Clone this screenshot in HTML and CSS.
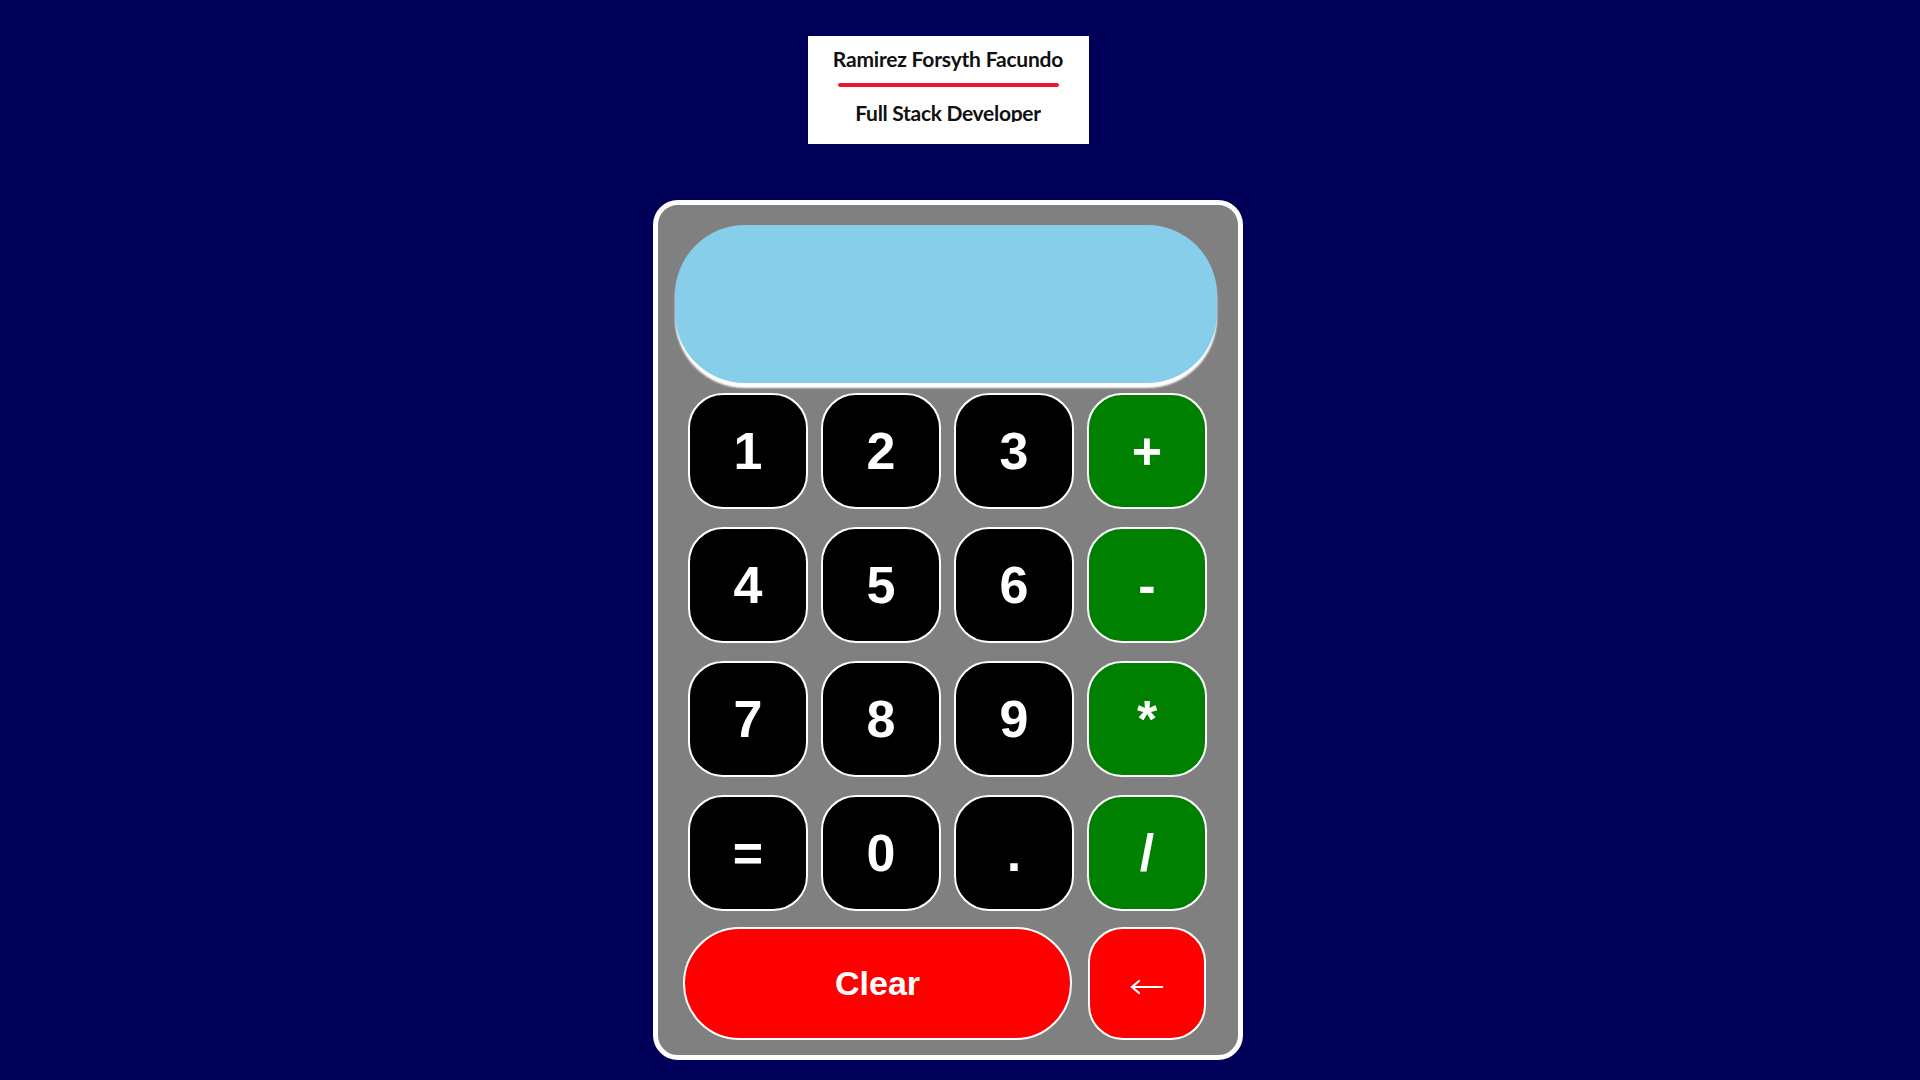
FILE: index.html
```html
<!DOCTYPE html>
<html lang="es">
<head>
<meta charset="utf-8">
<title>Calculadora</title>
<link rel="stylesheet" href="styles.css">
</head>
<body>
<div class="page">
  <header class="card">
    <div class="name">Ramirez Forsyth Facundo</div>
    <div class="rule"></div>
    <div class="role">Full Stack Developer</div>
  </header>
  <main class="calc">
    <div class="display"></div>
    <div class="keys">
      <button class="key num">1</button>
      <button class="key num">2</button>
      <button class="key num">3</button>
      <button class="key op">+</button>
      <button class="key num">4</button>
      <button class="key num">5</button>
      <button class="key num">6</button>
      <button class="key op">-</button>
      <button class="key num">7</button>
      <button class="key num">8</button>
      <button class="key num">9</button>
      <button class="key op">*</button>
      <button class="key num">=</button>
      <button class="key num">0</button>
      <button class="key num">.</button>
      <button class="key op">/</button>
    </div>
    <div class="bottom">
      <button class="clear">Clear</button>
      <button class="back" aria-label="Borrar">
        <svg class="arrow" width="34" height="16" viewBox="0 0 34 16" fill="none" stroke="#fff" stroke-width="2.2" stroke-linecap="square">
          <path d="M2 8 H32"/>
          <path d="M9 2 L2 8 L9 14" stroke-linecap="round" stroke-linejoin="miter"/>
        </svg>
      </button>
    </div>
  </main>
</div>
</body>
</html>
```
FILE: styles.css
```css
html, body {
  margin: 0;
  padding: 0;
}
body {
  background: #000058;
  font-family: "Liberation Sans", Arial, sans-serif;
}
.page {
  display: flex;
  flex-direction: column;
  align-items: center;
  padding-top: 36px;
  padding-right: 24px;
  height: 1080px;
  box-sizing: border-box;
}
.card {
  width: 281px;
  height: 108px;
  background: #fff;
  box-sizing: border-box;
  padding-top: 11px;
  display: flex;
  flex-direction: column;
  align-items: center;
  font-family: Lato, "Open Sans", sans-serif;
  font-weight: 700;
  color: #111;
}
.name {
  font-size: 21px;
  line-height: 24px;
  letter-spacing: -0.2px;
}
.rule {
  margin-top: 12px;
  width: 221px;
  height: 4px;
  border-radius: 2px;
  background: #e8192c;
}
.role {
  margin-top: 14px;
  font-size: 21px;
  line-height: 24px;
  height: 21px;
  overflow: hidden;
  letter-spacing: -0.3px;
}
.calc {
  margin-top: 56px;
  width: 590px;
  height: 860px;
  box-sizing: border-box;
  border: 5px solid #fff;
  border-radius: 25px;
  background: #808080;
  padding-top: 20px;
}
.display {
  margin-left: 17px;
  width: 542px;
  height: 158px;
  background: #87ceeb;
  border-radius: 70px;
  box-shadow: 0 5px 2px #fff;
}
.keys {
  margin-top: 10px;
  padding-left: 30px;
  display: grid;
  grid-template-columns: repeat(4, 120px);
  grid-auto-rows: 116px;
  column-gap: 13px;
  row-gap: 18px;
}
.key, .clear, .back {
  box-sizing: border-box;
  border: 2px solid #fff;
  color: #fff;
  font-family: "Liberation Sans", Arial, sans-serif;
  font-weight: 700;
  padding: 0;
  margin: 0;
  display: flex;
  align-items: center;
  justify-content: center;
}
.key {
  border-radius: 35px;
  font-size: 52px;
}
.num { background: #000; }
.op { background: #008000; }
.bottom {
  margin-top: 16px;
  padding-left: 25px;
  display: flex;
  gap: 16px;
}
.clear {
  width: 389px;
  height: 113px;
  border-radius: 57px;
  background: #ff0000;
  font-size: 34px;
}
.back {
  width: 118px;
  height: 113px;
  border-radius: 35px;
  background: #ff0000;
  padding-top: 6px;
}
.arrow {
  display: block;
}
```
